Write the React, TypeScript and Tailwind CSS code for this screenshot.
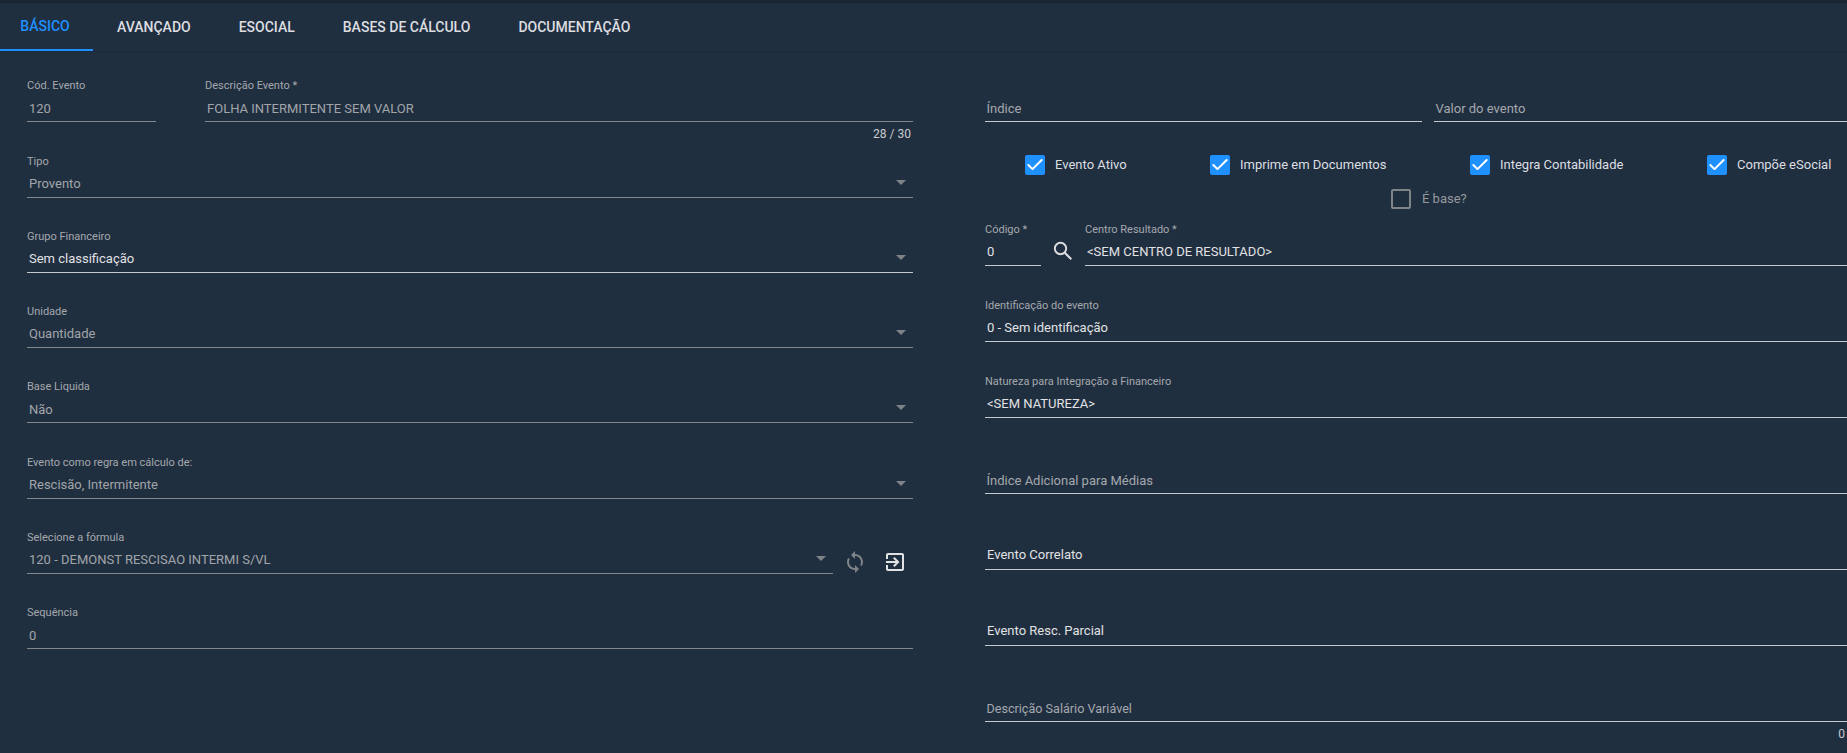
import { Check } from "lucide-react";
import { MdExitToApp, MdSync } from "react-icons/md";

const TABS = ["BÁSICO", "AVANÇADO", "ESOCIAL", "BASES DE CÁLCULO", "DOCUMENTAÇÃO"];

function Arrow() {
  return (
    <span className="mb-[3px] ml-auto mr-[5.5px] h-0 w-0 border-x-[5px] border-t-[5.5px] border-x-transparent border-t-[#7f8387]" />
  );
}

function Field({
  label,
  value,
  dim,
  select,
  lift,
  className,
}: {
  label?: string;
  value?: string;
  dim?: boolean;
  select?: boolean;
  lift?: boolean;
  className?: string;
}) {
  return (
    <div
      className={`flex h-[45px] flex-col justify-end border-b ${
        dim ? "border-[#84888d]" : "border-[#c5c8cb]"
      } ${className ?? ""}`}
    >
      {label && (
        <label className="mb-[1px] text-[11px] leading-[16px] text-[#a4a8ad]">{label}</label>
      )}
      <div
        className={`flex h-[26px] items-center px-[2px] text-[13px] ${
          dim ? "text-[#a1a5aa]" : "text-[#e0e2e4]"
        } ${lift ? "pb-[2px]" : ""}`}
      >
        {value}
        {select && <Arrow />}
      </div>
    </div>
  );
}

function Placeholder({
  text,
  size = "text-[13px]",
  className,
}: {
  text: string;
  size?: string;
  className?: string;
}) {
  return (
    <div className={`flex h-[45px] items-end border-b border-[#c5c8cb] ${className ?? ""}`}>
      <span className={`flex h-[26px] items-center px-[1.5px] text-[#a4a8ad] ${size}`}>{text}</span>
    </div>
  );
}

function Checkbox({ label, width }: { label: string; width: string }) {
  return (
    <div className={`flex items-center gap-[10px] ${width}`}>
      <span className="flex h-5 w-5 items-center justify-center rounded-[2px] bg-[#1e90ff]">
        <Check className="h-5 w-5 text-white" strokeWidth={2.4} />
      </span>
      <span className="text-[13px] text-[#dcdee0]">{label}</span>
    </div>
  );
}

function SearchIcon() {
  return (
    <svg
      viewBox="0 0 24 24"
      className="ml-[10px] mr-[10px] mt-[18px] h-6 w-6 shrink-0 fill-none stroke-[#dcdee0]"
    >
      <circle cx="9.5" cy="9.5" r="5.7" strokeWidth="1.9" />
      <path d="M13.8 13.8 20.3 20.3" strokeWidth="2.1" />
    </svg>
  );
}

export default function App() {
  return (
    <div className="h-[753px] overflow-hidden bg-[#202f40] font-['Roboto',sans-serif]">
      <div className="h-[3px] bg-[#1a2532]" />
      <nav className="flex h-[49px] border-b border-[#1c2937]">
        {TABS.map((tab, i) => (
          <div
            key={tab}
            className={`flex h-[48px] items-center justify-center text-sm font-medium ${
              i === 0
                ? "w-[93px] border-b-2 border-[#1e90ff] pr-[3px] text-[#1e90ff]"
                : "px-6 text-[#dcdee0]"
            }`}
          >
            {tab}
          </div>
        ))}
      </nav>

      <main className="flex pt-[25.4px]">
        <section className="ml-[27px] flex w-[886px] shrink-0 flex-col gap-[30.28px]">
          <div className="flex gap-[49px]">
            <Field label="Cód. Evento" value="120" dim className="w-[129px] shrink-0" />
            <div className="relative flex-1">
              <Field label="Descrição Evento *" value="FOLHA INTERMITENTE SEM VALOR" dim />
              <span className="absolute right-[2px] top-[48.6px] text-xs text-[#c9cbce]">
                28 / 30
              </span>
            </div>
          </div>
          <Field label="Tipo" value="Provento" dim select />
          <Field label="Grupo Financeiro" value="Sem classificação" select />
          <Field label="Unidade" value="Quantidade" dim select />
          <Field label="Base Liquida" value="Não" dim select />
          <Field label="Evento como regra em cálculo de:" value="Rescisão, Intermitente" dim select />
          <div className="flex items-center">
            <Field
              label="Selecione a fórmula"
              value="120 - DEMONST RESCISAO INTERMI S/VL"
              dim
              select
              className="w-[806px] shrink-0"
            />
            <div className="mt-[21px] flex items-center">
              <MdSync className="ml-[10px] text-[24px] text-[#7f8489]" />
              <MdExitToApp className="ml-[16px] text-[24px] text-[#e0e2e4]" />
            </div>
          </div>
          <Field label="Sequência" value="0" dim />
        </section>

        <section className="ml-[72px] flex min-w-0 flex-1 flex-col">
          <div className="flex gap-[12px]">
            <Placeholder text="Índice" className="w-[437px] shrink-0" />
            <Placeholder text="Valor do evento" className="flex-1" />
          </div>
          <div className="mt-[32.6px] flex pl-[40px]">
            <Checkbox label="Evento Ativo" width="w-[185px]" />
            <Checkbox label="Imprime em Documentos" width="w-[260px]" />
            <Checkbox label="Integra Contabilidade" width="w-[237px]" />
            <Checkbox label="Compõe eSocial" width="w-[140px]" />
          </div>
          <div className="ml-[406px] mt-[14px] flex items-center gap-[11px]">
            <span className="h-5 w-5 rounded-[2px] border-2 border-[#7f8489]" />
            <span className="text-[13px] text-[#94989d]">É base?</span>
          </div>
          <div className="mt-[12px] flex">
            <Field label="Código *" value="0" className="w-[56px] shrink-0" />
            <SearchIcon />
            <Field label="Centro Resultado *" value="<SEM CENTRO DE RESULTADO>" className="flex-1" />
          </div>
          <div className="mt-[31px] flex flex-col gap-[31px]">
            <Field label="Identificação do evento" value="0 - Sem identificação" />
            <Field label="Natureza para Integração a Financeiro" value="<SEM NATUREZA>" />
            <Placeholder text="Índice Adicional para Médias" size="pt-[2px] text-[13px]" />
            <Field value="Evento Correlato" lift />
            <Field value="Evento Resc. Parcial" lift />
            <div className="relative">
              <Placeholder text="Descrição Salário Variável" size="pt-[2px] text-[12.6px]" />
              <span className="absolute right-[2px] top-[49px] text-xs text-[#c9cbce]">0</span>
            </div>
          </div>
        </section>
      </main>
    </div>
  );
}
